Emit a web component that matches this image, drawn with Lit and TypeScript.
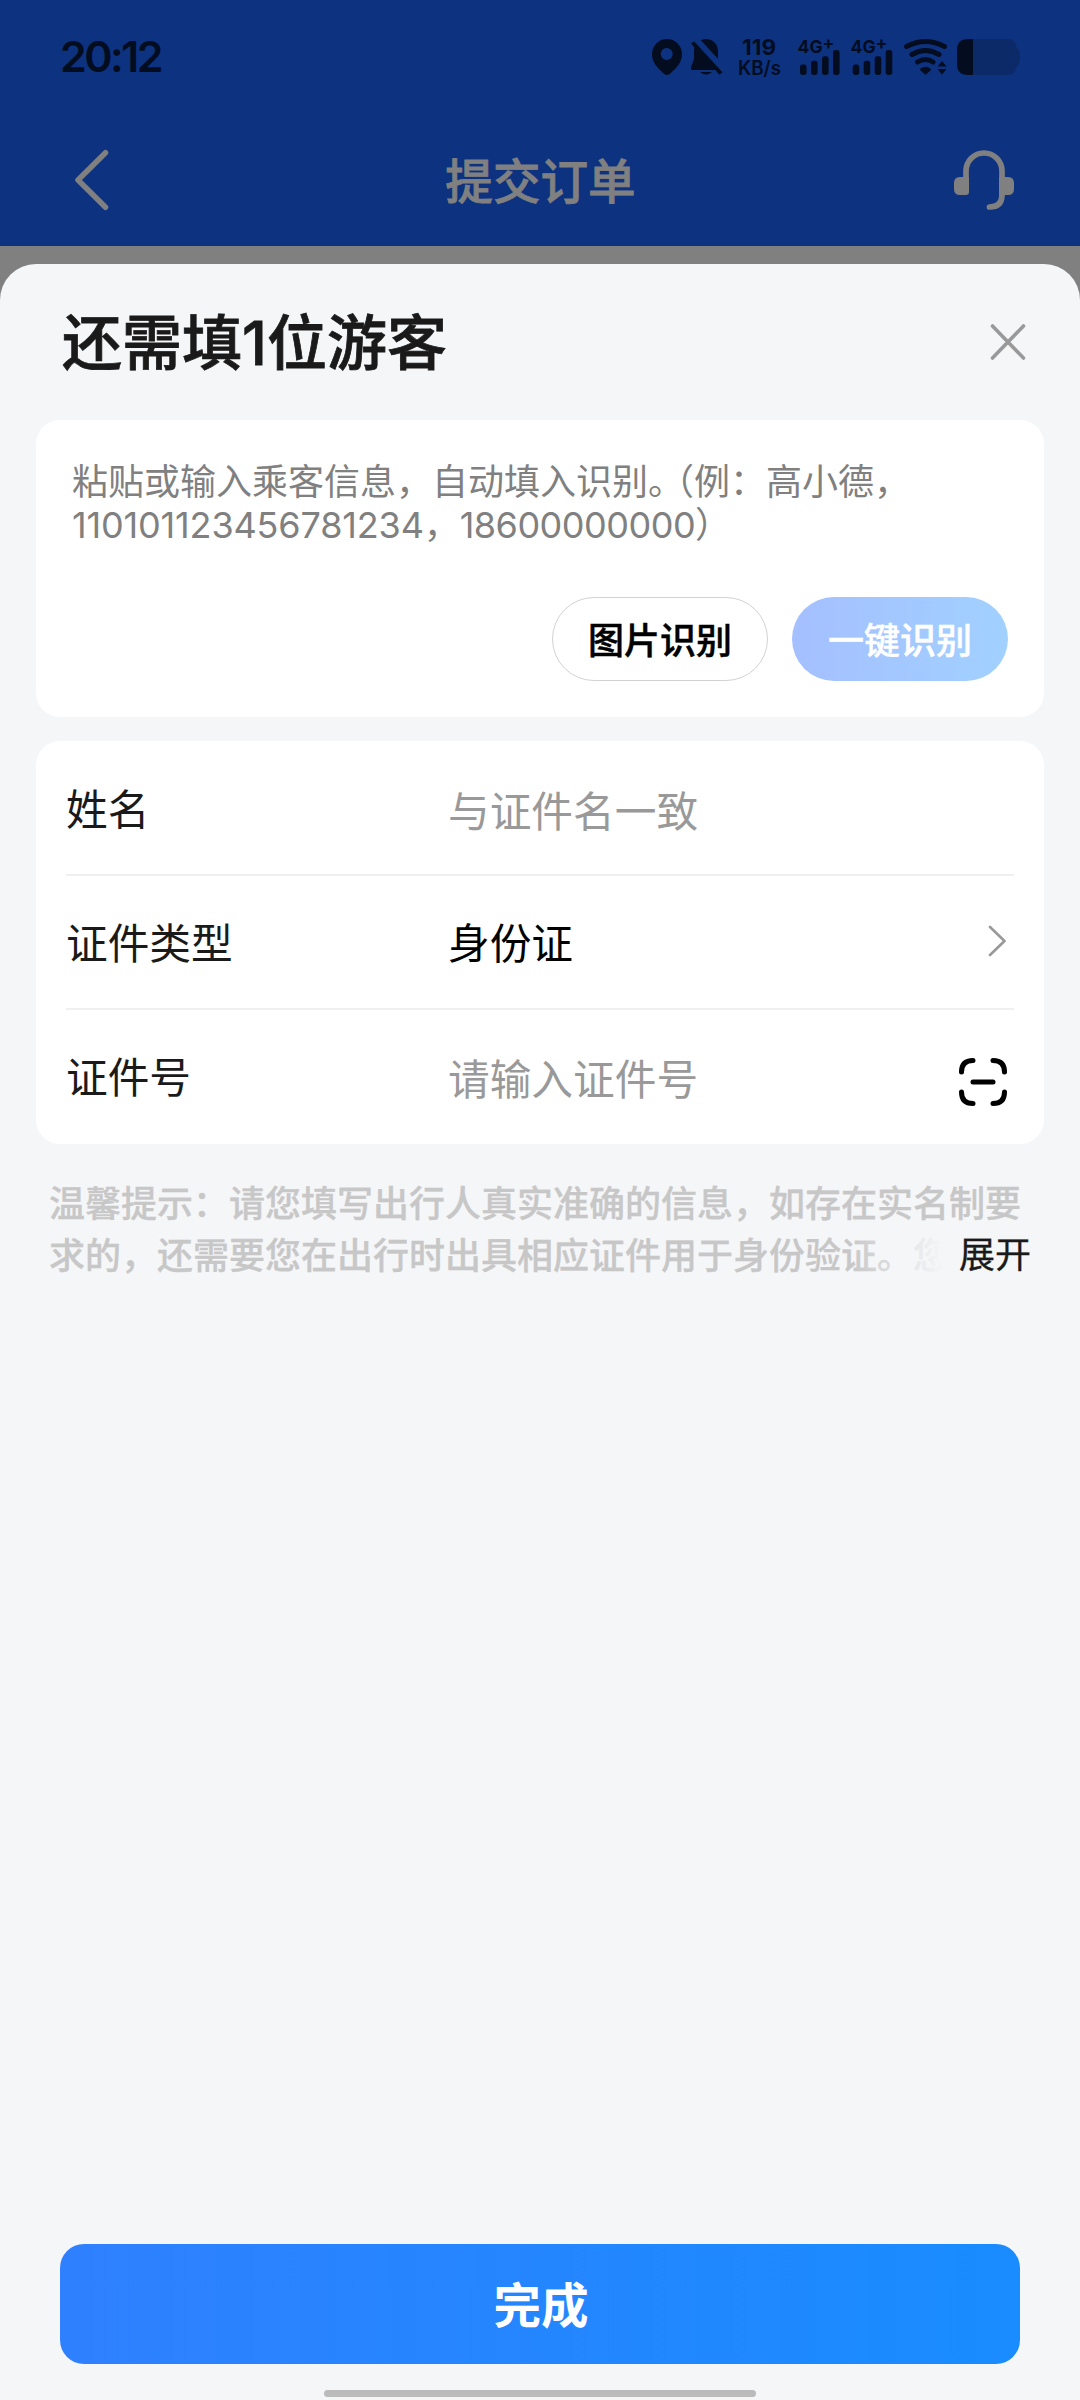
import { LitElement, html, svg, css } from "lit";
import { customElement } from "lit/decorators.js";

const signal = (x: number) => svg`
  <rect x=${x} y="64.5" width="6.6" height="10.5" rx="2.4" />
  <rect x=${x + 11} y="60.7" width="6.6" height="14.3" rx="2.4" />
  <rect x=${x + 22} y="56.3" width="6.6" height="18.7" rx="2.4" />
  <rect x=${x + 33} y="50" width="6.6" height="25" rx="2.4" />
`;

@customElement("status-bar")
class StatusBar extends LitElement {
  static styles = css`
    :host {
      display: flex;
      justify-content: space-between;
      height: 114px;
      padding: 0 60px;
      box-sizing: border-box;
      color: #040d20;
    }
    .time {
      font-size: 43px;
      font-weight: 600;
      line-height: 112px;
      letter-spacing: -2.6px;
    }
    .icons {
      display: block;
      width: 372px;
      height: 114px;
      fill: #040d20;
      font-weight: 700;
    }
    .line {
      fill: none;
      stroke: #040d20;
      stroke-width: 5;
      stroke-linecap: round;
    }
    .slash {
      stroke: #040d20;
      stroke-width: 4;
    }
    .gap {
      stroke: #0d3280;
      stroke-width: 9;
    }
    .battery {
      fill: #0c2a68;
    }
    .speed {
      font-size: 22px;
    }
    .unit {
      font-size: 19.5px;
      font-weight: 600;
    }
    .net {
      font-size: 18px;
    }
  `;
  render() {
    return html`
      <span class="time">20:12</span>
      <svg class="icons" viewBox="648 0 372 114">
        <path
          fill-rule="evenodd"
          d="M667 39a15 15 0 0 0-15 15c0 9 6 14 11 19q4 4 8 0c5-5 11-10 11-19a15 15 0 0 0-15-15zm-.3 9a6 6 0 1 1 0 12 6 6 0 0 1 0-12z"
        />
        <path d="M706 39c-7 0-12 5-12 12v8l-3 8q-1 3 2 3h26q3 0 1-3l-2-8v-8c0-7-5-12-12-12z" />
        <path d="M700 72h12q-6 5-12 0z" />
        <path class="gap" d="M694.500 40L725 73" />
        <path class="slash" d="M692.500 42.500L721 73.500" />
        <text class="speed" x="742" y="55" textLength="34" lengthAdjust="spacingAndGlyphs">119</text>
        <text class="unit" x="738" y="74.500" textLength="43" lengthAdjust="spacingAndGlyphs">KB/s</text>
        <text class="net" x="797.500" y="52.700" textLength="37" lengthAdjust="spacingAndGlyphs">4G<tspan dy="-3">+</tspan></text>
        <text class="net" x="850.500" y="52.700" textLength="37" lengthAdjust="spacingAndGlyphs">4G<tspan dy="-3">+</tspan></text>
        ${signal(800)} ${signal(852.7)}
        <path class="line" d="M906.500 46.500Q925.500 36.500 944.500 46.500" />
        <path class="line" d="M912 54.500Q925.500 46.500 939 54.500" />
        <path class="line" d="M917.500 62Q925.500 57 933 62" />
        <path d="M920.500 68.500q5-3.500 10 0q1 1 0 2l-4 3.500q-1 1-2 0l-4-3.500q-1-1 0-2z" />
        <path d="M937.500 66.500l4.500-5.500 4.500 5.500zM937.500 69l4.500 5.500 4.500-5.500z" />
        <path class="battery" d="M967 39h40q9 0 9.500 8.500 4 3.500 4 9.500t-4 9.500q-.5 8.500-9.500 8.500h-40z" />
        <path d="M973 39v36h-5q-11 0-11-11v-14q0-11 11-11z" />
      </svg>
    `;
  }
}

@customElement("nav-header")
class NavHeader extends LitElement {
  static styles = css`
    :host {
      display: grid;
      grid-template-columns: 60px 1fr 60px;
      align-items: center;
      height: 132px;
      padding: 0 66px;
      box-sizing: border-box;
      color: #808080;
    }
    .title {
      text-align: center;
      font-size: 47.6px;
      font-weight: 500;
      -webkit-text-stroke: 0.8px;
      line-height: 60px;
      padding: 3px 0 0 1px;
    }
    svg {
      display: block;
      width: 60px;
      height: 60px;
      fill: none;
      stroke: #808080;
      stroke-width: 6;
      stroke-linecap: round;
      stroke-linejoin: round;
      overflow: visible;
    }
    .pad {
      fill: #808080;
      stroke: none;
    }
  `;
  render() {
    return html`
      <svg viewBox="0 0 60 60"><path stroke-width="5.500" d="M39.500 2.700L12 30l27.500 27.300" /></svg>
      <span class="title">提交订单</span>
      <svg viewBox="0 0 60 60">
        <path d="M12 30V21a18 18 0 0 1 36 0v24q0 12-12.500 12" stroke-width="5.700" />
        <path class="pad" d="M6 27h9v15q0 3-3 3h-6q-6 0-6-6v-6q0-6 6-6zM45 27h9q6 0 6 6v6q0 6-6 6h-9z" />
      </svg>
    `;
  }
}

@customElement("form-row")
class FormRow extends LitElement {
  static properties = {
    label: {},
    value: {},
    placeholder: {},
  };
  declare label: string;
  declare value: string;
  declare placeholder: string;
  static styles = css`
    :host {
      display: grid;
      grid-template-columns: 382px 1fr auto;
      align-items: center;
      height: 132px;
      font-size: 41.7px;
      line-height: 60px;
    }
    .label {
      color: #1a1a1a;
      padding-top: 4px;
    }
    .value {
      color: #000;
      padding-top: 4px;
    }
    .hint {
      color: #999;
      padding-top: 8px;
    }
  `;
  render() {
    return html`
      <span class="label">${this.label}</span>
      ${this.value
        ? html`<span class="value">${this.value}</span>`
        : html`<span class="hint">${this.placeholder}</span>`}
      <slot></slot>
    `;
  }
}

@customElement("app-root")
class AppRoot extends LitElement {
  static styles = css`
    :host {
      display: flex;
      flex-direction: column;
      width: 1080px;
      height: 2400px;
      overflow: hidden;
      background: #808080;
      font-family: Inter, "Noto Sans CJK SC", sans-serif;
    }
    .top {
      background: #0d3280;
      height: 246px;
      margin-bottom: 18px;
      flex: none;
    }
    .sheet {
      flex: 1;
      display: flex;
      flex-direction: column;
      background: #f5f6f8;
      border-radius: 36px 36px 0 0;
      padding: 0 36px;
    }
    .head {
      display: flex;
      align-items: center;
      justify-content: space-between;
      height: 156px;
      padding: 0 18px 0 26px;
    }
    .heading {
      font-size: 60px;
      font-weight: 500;
      -webkit-text-stroke: 0.8px;
      color: #1a1a1a;
      line-height: 80px;
      padding-top: 2px;
    }
    .close {
      width: 36px;
      height: 36px;
      stroke: #999;
      stroke-width: 3.6;
      stroke-linecap: round;
      fill: none;
    }
    .card {
      background: #fff;
      border-radius: 24px;
      box-sizing: border-box;
    }
    .paste {
      display: flex;
      flex-direction: column;
      justify-content: space-between;
      height: 297px;
      padding: 41px 36px 36px;
      margin-bottom: 24px;
    }
    .sample {
      font-size: 36px;
      line-height: 42.5px;
      color: #808080;
    }
    .tight {
      letter-spacing: -8px;
    }
    .number {
      letter-spacing: -0.15px;
    }
    .phone {
      letter-spacing: -0.5px;
    }
    .actions {
      display: flex;
      justify-content: flex-end;
      gap: 24px;
    }
    .pill {
      width: 216px;
      height: 84px;
      box-sizing: border-box;
      border-radius: 42px;
      display: flex;
      align-items: center;
      justify-content: center;
      font-size: 36px;
      font-weight: 500;
      -webkit-text-stroke: 0.5px;
      padding-bottom: 2px;
    }
    .plain {
      border: 1.5px solid #d2d2d2;
      color: #000;
    }
    .primary {
      color: #fff;
      background: linear-gradient(90deg, #a5bfff, #a1d1ff);
    }
    .form {
      height: 403px;
      padding: 1px 30px 0;
    }
    .rule {
      height: 2px;
      background: #f0f0f0;
    }
    .chevron {
      width: 18px;
      height: 32px;
      margin: 0 8px 2px 0;
      fill: none;
      stroke: #999;
      stroke-width: 2.6;
      stroke-linecap: round;
      stroke-linejoin: round;
    }
    .scan {
      width: 48px;
      height: 48px;
      margin: 12px 7px 0 0;
      fill: none;
      stroke: #000;
      stroke-width: 5;
      stroke-linecap: round;
    }
    .tip {
      position: relative;
      height: 104px;
      margin: 35px 0 0 13px;
      width: 982px;
      overflow: hidden;
      font-size: 36px;
      font-weight: 500;
      -webkit-text-stroke: 0.3px;
      line-height: 51.5px;
      color: #c7c7c7;
    }
    .fade {
      position: absolute;
      right: 0;
      bottom: 0;
      width: 182px;
      height: 52px;
      background: linear-gradient(90deg, #f5f6f800, #f5f6f8 95px);
    }
    .more {
      position: absolute;
      right: 0;
      bottom: 2px;
      color: #1a1a1a;
      font-weight: 400;
    }
    .submit {
      display: flex;
      align-items: center;
      justify-content: center;
      box-sizing: border-box;
      height: 120px;
      margin: auto 24px 26px;
      padding: 0 0 4px 2px;
      border-radius: 24px;
      color: #fff;
      font-size: 47.5px;
      font-weight: 700;
      background: linear-gradient(90deg, #2f80ff, #198cff);
    }
    .home {
      width: 432px;
      height: 7px;
      border-radius: 4px;
      background: #bbb;
      margin: 0 auto 3px;
      flex: none;
    }
  `;
  render() {
    return html`
      <div class="top">
        <status-bar></status-bar>
        <nav-header></nav-header>
      </div>
      <div class="sheet">
        <div class="head">
          <span class="heading">还需填1位游客</span>
          <svg class="close" viewBox="0 0 36 36"><path d="M2.500 2L33.500 34M33.500 2L2.500 34" /></svg>
        </div>
        <div class="card paste">
          <div class="sample">
            粘贴或输入乘客信息，自动填入识别<span class="tight">。</span>（例：高小德，<br /><span class="number"
              >110101123456781234，</span
            ><span class="phone">18600000000</span>）
          </div>
          <div class="actions">
            <div class="pill plain">图片识别</div>
            <div class="pill primary">一键识别</div>
          </div>
        </div>
        <div class="card form">
          <form-row label="姓名" placeholder="与证件名一致"></form-row>
          <div class="rule"></div>
          <form-row label="证件类型" value="身份证">
            <svg class="chevron" viewBox="0 0 18 32"><path d="M2 2l14.500 14L2 30" /></svg>
          </form-row>
          <div class="rule"></div>
          <form-row label="证件号" placeholder="请输入证件号">
            <svg class="scan" viewBox="0 0 48 48">
              <path
                d="M14 2.500q-11.500 0-11.500 11.500M34 2.500q11.500 0 11.500 11.500M14 45.500q-11.500 0-11.500-11.500M34 45.500q11.500 0 11.500-11.500M14 24H34"
              />
            </svg>
          </form-row>
        </div>
        <div class="tip">
          温馨提示：请您填写出行人真实准确的信息，如存在实名制要求的，还需要您在出行时出具相应证件用于身份验证。您
          <span class="fade"></span><span class="more">展开</span>
        </div>
        <div class="submit">完成</div>
        <div class="home"></div>
      </div>
    `;
  }
}
